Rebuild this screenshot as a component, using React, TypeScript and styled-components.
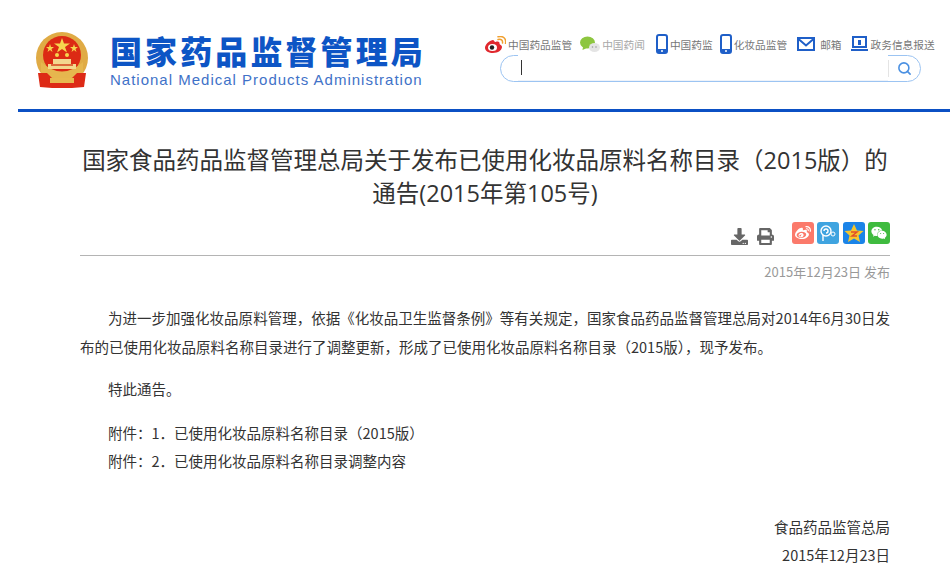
import * as React from "react";
import styled, { createGlobalStyle } from "styled-components";
import { Search } from "lucide-react";
import { FaWeixin, FaWeibo, FaDownload, FaPrint } from "react-icons/fa";

const Global = createGlobalStyle`
    html, body {
        margin: 0;
        height: 578px;
        overflow: hidden;
        background: #fff;
    }
    body {
        font-family: "Noto Sans CJK SC", "Liberation Sans", sans-serif;
        color: #333;
    }
`;

const Header = styled.header`
    display: flex;
    height: 109px;
    margin-left: 18px;
    border-bottom: 3px solid #0b50c4;
    padding-left: 17px;
    box-sizing: content-box;
`;
const Brand = styled.div`
    display: flex;
    align-items: center;
    gap: 21px;
    width: 450px;
    padding-top: 10px;
`;
const BrandText = styled.div`
    display: flex;
    flex-flow: column;
    width: 320px;
`;
const BrandCn = styled.div`
    font-size: 32px;
    font-weight: 900;
    line-height: 38px;
    letter-spacing: 3.1px;
    color: #0d55c5;
    white-space: nowrap;
`;
const BrandEn = styled.div`
    font-family: "Liberation Sans", sans-serif;
    font-size: 15px;
    line-height: 17px;
    margin-top: 2px;
    letter-spacing: 1px;
    color: #3f72c8;
    white-space: nowrap;
`;
const Tools = styled.div`
    display: flex;
    flex-flow: column;
    padding-top: 33px;
    width: 452px;
`;
const LinkRow = styled.nav`
    display: flex;
    align-items: center;
    height: 22px;
`;
const ToolLink = styled.a<{ $gap: number; $iconGap?: number; $light?: boolean }>`
    display: flex;
    align-items: center;
    gap: ${(p) => p.$iconGap ?? 2}px;
    margin-right: ${(p) => p.$gap}px;
    font-size: 10.7px;
    white-space: nowrap;
    color: ${(p) => (p.$light ? "#a8a8a8" : "#777")};
    svg {
        flex: none;
    }
`;
const SearchBox = styled.div`
    display: flex;
    align-items: stretch;
    width: 421px;
    height: 27px;
    margin-left: 15px;
    box-sizing: border-box;
    border: 1px solid #9cc4f2;
    border-radius: 14px;
`;
const SearchField = styled.div`
    display: flex;
    align-items: center;
    flex: 1;
    margin: -1px 0 0 17px;
    padding-left: 3px;
    background: #fff;
    border-bottom: 1px solid #eef3fa;
`;
const Caret = styled.span`
    width: 1px;
    height: 15px;
    background: #333;
`;
const SearchButton = styled.button`
    display: flex;
    align-items: center;
    justify-content: center;
    width: 32px;
    padding: 0;
    border: 0;
    border-left: 1px solid #e4e4e4;
    background: none;
    color: #4a90e2;
    margin: 4px 0;
`;

const Article = styled.main`
    width: 810px;
    margin: 0 auto 0 80px;
`;
const Title = styled.h1`
    margin: 32px 0 0;
    font-family: "Open Sans", "Noto Sans CJK SC", sans-serif;
    font-size: 23.5px;
    font-weight: 400;
    line-height: 33px;
    text-align: center;
    color: #333;
`;
const ActionRow = styled.div`
    display: flex;
    align-items: center;
    justify-content: flex-end;
    height: 24px;
    margin-top: 11px;
`;
const PlainAction = styled.span<{ $gap: number }>`
    display: flex;
    margin-right: ${(p) => p.$gap}px;
    padding-top: 6px;
    color: #666;
`;
const ShareGroup = styled.div`
    display: flex;
    gap: 3.3px;
`;
const ShareButton = styled.span<{ $bg: string }>`
    display: flex;
    align-items: center;
    justify-content: center;
    width: 22px;
    height: 22px;
    border-radius: 3px;
    background: ${(p) => p.$bg};
    color: #fff;
`;
const Meta = styled.div`
    margin-top: 10px;
    padding-top: 6px;
    border-top: 1px solid #b4b4b4;
    font-size: 13px;
    line-height: 20px;
    text-align: right;
    color: #999;
`;
const Body = styled.div`
    margin-top: 21px;
    font-size: 14.5px;
    line-height: 29px;
    color: #333;
`;
const Para = styled.p<{ $after?: number }>`
    margin: 0 0 ${(p) => p.$after ?? 0}px;
    text-indent: 28px;
    text-align: justify;
`;
const Attachment = styled(Para)`
    line-height: 28px;
`;
const Sign = styled.p`
    margin: 0;
    text-align: right;
    line-height: 28px;
`;

const Emblem = () => (
    <svg width="54" height="58" viewBox="0 0 54 58">
        <circle cx="27" cy="27" r="26" fill="#e0ab45" />
        <circle cx="27" cy="24" r="19" fill="#dc2a14" />
        <path d="M6 31 Q27 50 48 31 L48 42 Q27 54 6 42 Z" fill="#e6b64e" />
        <path d="M13 33h28v5H13zM18 28h18v5H18z" fill="#f3d88e" />
        <path d="M16 33h22v2H16z" fill="#dc6a3a" />
        <path d="M3 42 L12 42 L20 50 L34 50 L42 42 L51 42 L49 56 L37 57 L17 57 L5 56 Z" fill="#dd2a16" />
        <path d="M15 47h24v5H15z" fill="#e8b84f" />
        <g fill="#f6d64e">
            <polygon points="27,7 29,12.500 35,12.500 30,16 32,21.500 27,18 22,21.500 24,16 19,12.500 25,12.500" />
            <polygon points="15,13 16,16 19,16 16.500,18 17.500,21 15,19 12.500,21 13.500,18 11,16 14,16" />
            <polygon points="39,13 40,16 43,16 40.500,18 41.500,21 39,19 36.500,21 37.500,18 35,16 38,16" />
            <circle cx="22" cy="24" r="2" />
            <circle cx="32" cy="24" r="2" />
        </g>
    </svg>
);

const WeiboColor = () => (
    <svg width="21" height="17" viewBox="0 0 21 17">
        <path d="M8 4C3 5 0 9 0 12c0 3 4 5 8 5 5 0 9-3 9-6 0-2-2-2-2.500-3 .5-2-1-3-4-2-1 .3-1-1.500-2.500-2z" fill="#e0282e" />
        <ellipse cx="7.500" cy="11.500" rx="4.500" ry="3.500" fill="#fff" />
        <circle cx="7" cy="11.500" r="2.200" fill="#222" />
        <path d="M13 3.500c3-1 5 1 4.500 3.500M13 .8c5-1.500 8.500 2 7.500 6.500" fill="none" stroke="#f0a030" strokeWidth="1.500" strokeLinecap="round" />
    </svg>
);

const WechatColor = () => (
    <svg width="20" height="17" viewBox="0 0 20 17">
        <ellipse cx="7.500" cy="6.500" rx="7.500" ry="6" fill="#8dc63f" />
        <path d="M3 10.500 L2.500 14 L7 12z" fill="#8dc63f" />
        <ellipse cx="14.500" cy="11.500" rx="5.500" ry="4.500" fill="#e4e4e4" />
        <circle cx="12.500" cy="11" r=".8" fill="#999" />
        <circle cx="16" cy="11" r=".8" fill="#999" />
    </svg>
);

const PhoneIcon = () => (
    <svg width="12" height="20" viewBox="0 0 12 20">
        <rect x="1" y="1" width="10" height="18" rx="2" fill="none" stroke="#1f5fc8" strokeWidth="2" />
        <rect x="1" y="15" width="10" height="4" rx="1" fill="#1f5fc8" />
        <circle cx="6" cy="17" r="1" fill="#fff" />
    </svg>
);

const MailIcon = () => (
    <svg width="18" height="14" viewBox="0 0 18 14">
        <rect x="1" y="1" width="16" height="12" fill="none" stroke="#1f5fc8" strokeWidth="2" />
        <path d="M1.500 2 L9 8.500 L16.500 2" fill="none" stroke="#1f5fc8" strokeWidth="2" />
    </svg>
);

const ScreenIcon = () => (
    <svg width="17" height="16" viewBox="0 0 17 16">
        <rect x="2" y="1" width="13" height="10" fill="none" stroke="#1f5fc8" strokeWidth="2" />
        <rect x="7" y="4" width="3" height="5" fill="#1f5fc8" />
        <rect x="0" y="13" width="17" height="2" fill="#1f5fc8" />
    </svg>
);

const TencentWeiboIcon = () => (
    <svg width="18" height="18" viewBox="0 0 18 18" fill="none" stroke="#fff">
        <circle cx="7" cy="7" r="5" strokeWidth="1.400" />
        <path d="M5 7a2 2 0 1 1 2 2M4 11v6" strokeWidth="1.400" />
        <circle cx="14" cy="10" r="2" strokeWidth="1" />
    </svg>
);

const QzoneIcon = () => (
    <svg width="20" height="20" viewBox="0 0 20 20">
        <polygon points="10,1 13,7.500 19.500,8 14.500,12.500 16,19 10,15.500 4,19 5.500,12.500 .5,8 7,7.500" fill="#f6c62e" />
        <path d="M7 9h6l-5 4h5" fill="none" stroke="#e0502a" strokeWidth="1.500" />
    </svg>
);

export default function App() {
    return (
        <>
            <Global />
            <Header>
                <Brand>
                    <Emblem />
                    <BrandText>
                        <BrandCn>国家药品监督管理局</BrandCn>
                        <BrandEn>National Medical Products Administration</BrandEn>
                    </BrandText>
                </Brand>
                <Tools>
                    <LinkRow>
                        <ToolLink $gap={8}>
                            <WeiboColor />
                            中国药品监管
                        </ToolLink>
                        <ToolLink $gap={11} $light>
                            <WechatColor />
                            中国药闻
                        </ToolLink>
                        <ToolLink $gap={7}>
                            <PhoneIcon />
                            中国药监
                        </ToolLink>
                        <ToolLink $gap={10}>
                            <PhoneIcon />
                            化妆品监管
                        </ToolLink>
                        <ToolLink $gap={9} $iconGap={5}>
                            <MailIcon />
                            邮箱
                        </ToolLink>
                        <ToolLink $gap={0} $iconGap={3}>
                            <ScreenIcon />
                            政务信息报送
                        </ToolLink>
                    </LinkRow>
                    <SearchBox>
                        <SearchField>
                            <Caret />
                        </SearchField>
                        <SearchButton>
                            <Search size={15} strokeWidth={2.5} />
                        </SearchButton>
                    </SearchBox>
                </Tools>
            </Header>
            <Article>
                <Title>国家食品药品监督管理总局关于发布已使用化妆品原料名称目录（2015版）的通告(2015年第105号)</Title>
                <ActionRow>
                    <PlainAction $gap={9}>
                        <FaDownload size={17} />
                    </PlainAction>
                    <PlainAction $gap={18}>
                        <FaPrint size={17} />
                    </PlainAction>
                    <ShareGroup>
                        <ShareButton $bg="#fb7a6b">
                            <FaWeibo size={16} />
                        </ShareButton>
                        <ShareButton $bg="#3fa4e0">
                            <TencentWeiboIcon />
                        </ShareButton>
                        <ShareButton $bg="#1b84e8">
                            <QzoneIcon />
                        </ShareButton>
                        <ShareButton $bg="#3fbb3f">
                            <FaWeixin size={16} />
                        </ShareButton>
                    </ShareGroup>
                </ActionRow>
                <Meta>2015年12月23日 发布</Meta>
                <Body>
                    <Para $after={13}>
                        为进一步加强化妆品原料管理，依据《化妆品卫生监督条例》等有关规定，国家食品药品监督管理总局对2014年6月30日发布的已使用化妆品原料名称目录进行了调整更新，形成了已使用化妆品原料名称目录（2015版），现予发布。
                    </Para>
                    <Para $after={16}>特此通告。</Para>
                    <Attachment>附件：1．已使用化妆品原料名称目录（2015版）</Attachment>
                    <Attachment $after={38}>附件：2．已使用化妆品原料名称目录调整内容</Attachment>
                    <Sign>食品药品监管总局</Sign>
                    <Sign>2015年12月23日</Sign>
                </Body>
            </Article>
        </>
    );
}
